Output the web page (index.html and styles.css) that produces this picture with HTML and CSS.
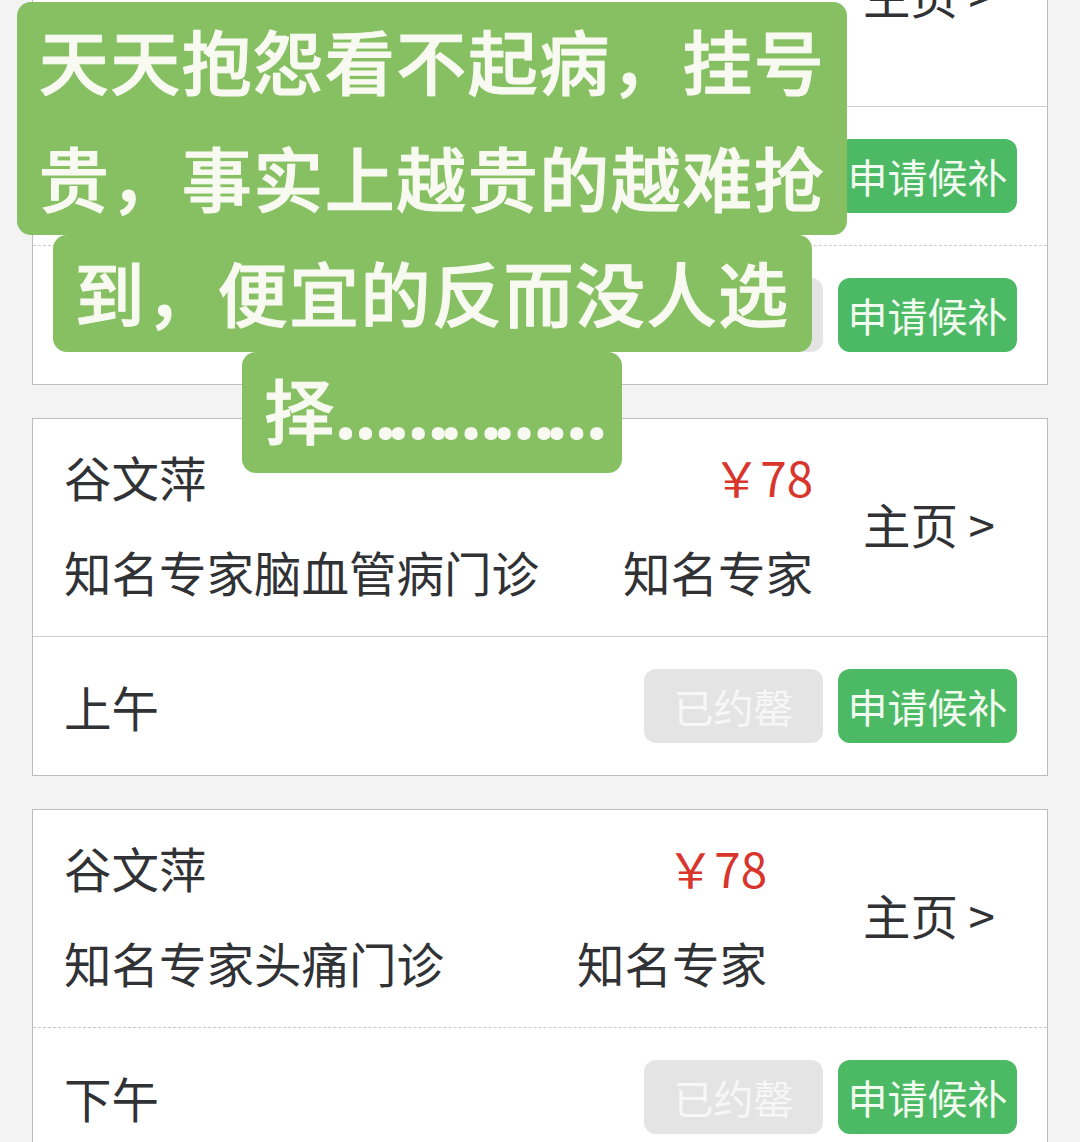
FILE: index.html
```html
<!DOCTYPE html>
<html lang="zh-CN">
  <head>
    <meta charset="UTF-8" />
    <meta name="viewport" content="width=device-width, initial-scale=1.0" />
    <title>医生排班</title>
    <link rel="stylesheet" href="styles.css">
  </head>
  <body>
    <div class="page">
      <div class="list">
        <section class="card">
          <div class="card-head">
            <div class="doc">
              <div class="doc-name">谷文萍</div>
              <div class="doc-dept">知名专家神经内科门诊</div>
            </div>
            <div class="doc-meta">
              <div class="price">￥78</div>
              <div class="doc-title">知名专家</div>
            </div>
            <a class="home-link">主页 &gt;</a>
          </div>
          <div class="slot">
            <span class="slot-time">上午</span>
            <div class="slot-actions">
              <button class="btn btn-full">已约罄</button>
              <button class="btn btn-wait">申请候补</button>
            </div>
          </div>
          <div class="slot">
            <span class="slot-time">下午</span>
            <div class="slot-actions">
              <button class="btn btn-full">已约罄</button>
              <button class="btn btn-wait">申请候补</button>
            </div>
          </div>
        </section>

        <section class="card">
          <div class="card-head">
            <div class="doc">
              <div class="doc-name">谷文萍</div>
              <div class="doc-dept">知名专家脑血管病门诊</div>
            </div>
            <div class="doc-meta">
              <div class="price">￥78</div>
              <div class="doc-title">知名专家</div>
            </div>
            <a class="home-link">主页 &gt;</a>
          </div>
          <div class="slot">
            <span class="slot-time">上午</span>
            <div class="slot-actions">
              <button class="btn btn-full">已约罄</button>
              <button class="btn btn-wait">申请候补</button>
            </div>
          </div>
        </section>

        <section class="card">
          <div class="card-head card-head-dashed">
            <div class="doc">
              <div class="doc-name">谷文萍</div>
              <div class="doc-dept">知名专家头痛门诊</div>
            </div>
            <div class="doc-meta doc-meta-wide">
              <div class="price">￥78</div>
              <div class="doc-title">知名专家</div>
            </div>
            <a class="home-link">主页 &gt;</a>
          </div>
          <div class="slot">
            <span class="slot-time">下午</span>
            <div class="slot-actions">
              <button class="btn btn-full">已约罄</button>
              <button class="btn btn-wait">申请候补</button>
            </div>
          </div>
        </section>
      </div>

      <!-- caption pasted over the screenshot -->
      <div class="caption">
        <div class="caption-line">天天抱怨看不起病，挂号<br>贵，事实上越贵的越难抢</div>
        <div class="caption-line">到，便宜的反而没人选</div>
        <div class="caption-line">择<span class="dots">……………</span></div>
      </div>
    </div>
  </body>
</html>
```

FILE: styles.css
```css
body {
  margin: 0;
  padding: 0;
  background-color: #f3f3f3;
  font-family: "Noto Sans CJK SC", "Noto Sans", sans-serif;
  color: #303236;
}
.page {
  position: relative;
  height: 1142px;
  overflow: hidden;
}
.list {
  display: flex;
  flex-direction: column;
  gap: 33px;
  margin-top: -112px;
  padding: 0 32px;
}
.card {
  background-color: white;
  border: 1px solid #bdbdbd;
}
.card-head {
  display: flex;
  align-items: center;
  height: 209px;
  padding: 0 52px 8px 31px;
  border-bottom: 1px solid #cfcfcf;
  font-size: 47.5px;
  line-height: 95px;
}
.card-head-dashed {
  border-bottom: 1px dashed #c9c9c9;
}
.doc-meta {
  margin-left: 84px;
  text-align: right;
}
.doc-meta-wide {
  margin-left: 133px;
}
.price {
  color: #d8352c;
}
.home-link {
  margin-left: auto;
  color: #303236;
  text-decoration: none;
}
.slot {
  display: flex;
  align-items: center;
  height: 138px;
  padding: 0 30px 0 31px;
  border-bottom: 1px dashed #cccccc;
}
.slot:last-child {
  border-bottom: none;
}
.slot-time {
  font-size: 47.5px;
}
.slot-actions {
  display: flex;
  gap: 15px;
  margin-left: auto;
}
.btn {
  width: 179px;
  height: 74px;
  border: none;
  border-radius: 12px;
  font-family: inherit;
  font-size: 40px;
  padding: 0;
  color: #f7f7f7;
}
.btn-full {
  background-color: #e4e4e4;
}
.btn-wait {
  background-color: #4cb964;
  color: #f2fbef;
}
.caption {
  position: absolute;
  top: 2px;
  left: 16px;
  width: 832px;
  display: flex;
  flex-direction: column;
  align-items: center;
  font-size: 70px;
  font-weight: 500;
  -webkit-text-stroke: 1px #f8faf1;
  line-height: 117px;
  letter-spacing: 1.5px;
  color: #f8faf1;
}
.caption-line {
  background-color: #86c063;
  border-radius: 14px;
  padding: 0 22px 4px;
  line-height: 113px;
  text-align: center;
  white-space: nowrap;
}
.caption-line:first-child {
  line-height: 116.5px;
  padding-bottom: 0;
}
.dots {
  font-family: "Noto Sans", sans-serif;
  font-weight: 700;
  letter-spacing: -7px;
}
```
